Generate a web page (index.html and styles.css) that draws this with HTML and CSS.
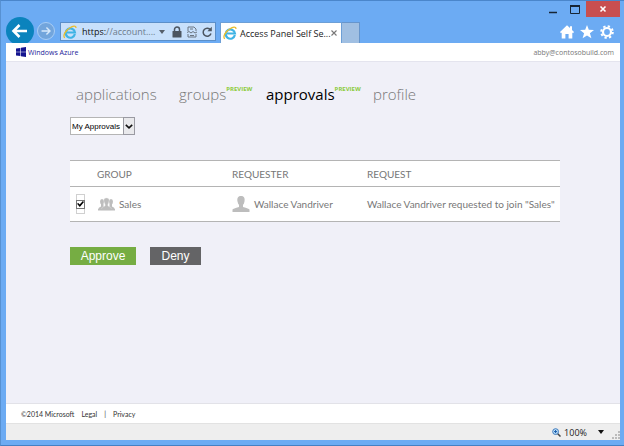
FILE: index.html
```html
<!DOCTYPE html>
<html lang="en">
<head>
<meta charset="utf-8">
<title>Access Panel Self Service</title>
<link rel="stylesheet" href="styles.css">
</head>
<body>
<svg class="defs" width="0" height="0" aria-hidden="true">
  <symbol id="ie" viewBox="0 0 16 16">
    <path d="M13.6 10.4A5.3 5.3 0 1 1 13.7 8.6H4.6" fill="none" stroke="#3fb4e5" stroke-width="2.5"/>
    <path d="M2.2 14.6C-1 13 3 6 8 3.2C11 1 15 .2 14.8 3.4" fill="none" stroke="#e9bd2d" stroke-width="1.5"/>
  </symbol>
</svg>
<div class="window">
  <header class="chrome">
    <div class="navigation">
      <button class="back" aria-label="Back"><svg viewBox="0 0 28 28"><path d="M21 14H8M13.5 8L7.500 14L13.500 20" fill="none" stroke="#fff" stroke-width="2.600"/></svg></button>
      <button class="forward" aria-label="Forward"><svg viewBox="0 0 18 18"><path d="M4 9H13M9.500 5L13.500 9L9.500 13" fill="none" stroke="#d7e9fb" stroke-width="1.600"/></svg></button>
      <div class="address">
        <svg class="ie"><use href="#ie"/></svg>
        <span class="url"><b>https:</b>//account....</span>
        <svg class="drop" viewBox="0 0 6 4"><path d="M0 0H6L3 4Z" fill="#555f6b"/></svg>
        <svg class="small" viewBox="0 0 10 12"><path d="M2.500 6V3.500a2.500 2.500 0 0 1 5 0V6" fill="none" stroke="#4d5661" stroke-width="1.500"/><rect x=".5" y="5" width="9" height="6.500" rx=".5" fill="#4d5661"/></svg>
        <svg class="small" viewBox="0 0 10 12"><path d="M1 5V1H7L9 3V5M1 8V11H9V8M0 6.500L2 5.500L4 7L6 5.500L8 7L10 6M3 3H6M3 9.500H7" fill="none" stroke="#6b7580"/></svg>
        <svg class="small" viewBox="0 0 10 12"><path d="M8.500 4A4 4 0 1 0 9 7.500" fill="none" stroke="#4d5661" stroke-width="1.500"/><path d="M9.800 .8V5.200H5.400Z" fill="#4d5661"/></svg>
      </div>
      <div class="tab">
        <svg class="ie"><use href="#ie"/></svg>
        <span class="tab-title">Access Panel Self Se...</span>
        <button class="tab-close" aria-label="Close tab"><svg viewBox="0 0 6 6"><path d="M.5 .5L5.500 5.500M5.500 .5L.5 5.500" stroke="#777" stroke-width="1.100"/></svg></button>
      </div>
      <button class="new-tab" aria-label="New tab"></button>
    </div>
    <div class="corner">
      <div class="controls">
        <button aria-label="Minimize"><svg viewBox="0 0 10 10"><path d="M1 8.500H9" stroke="#172534" stroke-width="1.500"/></svg></button>
        <button aria-label="Maximize"><svg viewBox="0 0 10 10"><path d="M.5 2H9.500M.5 1.500V9.500H9.500V1.500" fill="none" stroke="#172534"/><path d="M0 2H10" stroke="#172534" stroke-width="2"/></svg></button>
        <button class="close" aria-label="Close"><svg viewBox="0 0 10 10"><path d="M2.500 2.500L7.500 7.500M7.500 2.500L2.500 7.500" stroke="#fff" stroke-width="1.600"/></svg></button>
      </div>
      <div class="tools">
        <button aria-label="Home"><svg viewBox="0 0 14 14"><path d="M7 .3L10 3V1.300H12V5L14 7L13 8.200L12.300 7.600V13.500H8.600V9H5.400V13.500H1.700V7.600L1 8.200L0 7Z" fill="#fff"/></svg></button>
        <button aria-label="Favorites"><svg viewBox="0 0 14 14"><path d="M7 0L8.800 4.800L14 5L9.900 8.200L11.400 13.300L7 10.400L2.600 13.300L4.100 8.200L0 5L5.200 4.800Z" fill="#fff"/></svg></button>
        <button aria-label="Settings"><svg viewBox="0 0 14 14"><circle cx="7" cy="7" r="4" fill="none" stroke="#fff" stroke-width="2.200"/><circle cx="7" cy="7" r="5.800" fill="none" stroke="#fff" stroke-width="2" stroke-dasharray="2.300 2.255"/></svg></button>
      </div>
    </div>
  </header>
  <div class="page">
    <div class="brand-bar">
      <a class="brand" href="#"><svg viewBox="0 0 10 10"><path d="M0 1.500L4.300 .9V4.700H0ZM4.900 .8L10 0V4.700H4.900ZM0 5.300H4.300V9.100L0 8.500ZM4.900 5.300H10V10L4.900 9.200Z" fill="#14148f"/></svg>Windows Azure</a>
      <span class="account">abby@contosobuild.com</span>
    </div>
    <main>
      <nav>
        <a href="#">applications</a>
        <a href="#">groups<sup>PREVIEW</sup></a>
        <a class="current" href="#" aria-current="page">approvals<sup>PREVIEW</sup></a>
        <a href="#">profile</a>
      </nav>
      <div class="filter">
        <select aria-label="Approval list"><option>My Approvals</option></select>
        <span class="arrow"><svg viewBox="0 0 8 5"><path d="M.8 .8L4 3.800L7.200 .8" fill="none" stroke="#111" stroke-width="1.600"/></svg></span>
      </div>
      <table>
        <thead><tr><th class="pick"></th><th class="group">GROUP</th><th class="requester">REQUESTER</th><th>REQUEST</th></tr></thead>
        <tbody><tr>
          <td><label class="tick"><input type="checkbox" checked aria-label="Select Sales request"></label></td>
          <td><span class="entity"><svg class="people" viewBox="0 0 18 14"><g fill="#bdbdbd"><ellipse cx="5" cy="4.800" rx="2" ry="2.700"/><ellipse cx="14" cy="4.800" rx="2" ry="2.700"/><path d="M1 12.800Q1.200 10.200 4 9.400V7H6.500V12.800ZM18 12.800Q17.800 10.200 15 9.400V7H12.500V12.800Z"/><path d="M9.500 1C6.800 1 6.500 3.200 7.300 5.400Q7.600 6.600 8.100 7V9Q4.400 9.900 4.100 12.800H14.900Q14.600 9.900 10.900 9V7Q11.400 6.600 11.700 5.400C12.500 3.200 12.200 1 9.500 1Z" stroke="#e6e6e6" stroke-width=".4"/><path d="M1 12H18V13.500H1Z"/></g></svg>Sales</span></td>
          <td><span class="entity"><svg class="person" viewBox="0 0 18 18"><path d="M9 1C5.500 1 5 3.700 5.500 6.500Q6 9 7 9.800V12Q1 13.500.5 14.500V17H17.500V14.500Q17 13.500 11 12V9.800Q12 9 12.500 6.500C13 3.700 12.500 1 9 1Z" fill="#bdbdbd"/></svg>Wallace Vandriver</span></td>
          <td>Wallace Vandriver requested to join "Sales"</td>
        </tr></tbody>
      </table>
      <div class="actions">
        <button class="approve">Approve</button>
        <button class="deny">Deny</button>
      </div>
    </main>
    <footer><span>©2014 Microsoft</span><a href="#">Legal</a><span>|</span><a href="#">Privacy</a></footer>
    <div class="status">
      <button class="zoom"><svg class="lens" viewBox="0 0 9 9"><path d="M5.500 5.500L8.500 8.500" stroke="#444" stroke-width="1.500"/><circle cx="3.600" cy="3.600" r="2.900" fill="#c4e5fa" stroke="#3c77bb"/><path d="M3.600 2V5.200M2 3.600H5.200" stroke="#165bad"/></svg>100%<svg class="drop" viewBox="0 0 6 4"><path d="M0 0H6L3 4Z" fill="#111"/></svg></button>
      <svg class="grip" viewBox="0 0 8 8"><path d="M6 0H8V2H6ZM3 3H5V5H3ZM6 3H8V5H6ZM0 6H2V8H0ZM3 6H5V8H3ZM6 6H8V8H6Z" fill="#bbb"/></svg>
    </div>
  </div>
</div>
</body>
</html>
```
FILE: styles.css
```css
* { box-sizing: border-box; }
body { margin: 0; font-family: Lato, "Open Sans", sans-serif; font-size: 10px; color: #777; }
button { border: 0; padding: 0; background: none; font: inherit; color: inherit; }
a { color: inherit; text-decoration: none; }
svg { display: block; flex: none; }
.defs { position: absolute; }
.window {
  min-height: 100vh;
  display: flex;
  flex-direction: column;
  padding: 0 4px 5px 5px;
  background: #6cabf3;
  border-top: 1px solid #4a86cb;
  border-left: 1px solid #5791d2;
  border-bottom: 1px solid #4480c4;
}

.chrome { display: flex; justify-content: space-between; height: 42px; overflow: hidden; font: 9px "Open Sans", sans-serif; }
.navigation { display: flex; align-items: flex-end; }
.back { width: 28px; height: 28px; margin-bottom: -2px; border-radius: 50%; background: #0b83bd; }
.back svg { width: 28px; height: 28px; }
.forward { width: 18px; height: 18px; margin: 0 5px 3px 3px; border: 1px solid #a8cdf5; border-radius: 50%; background: #72a5dc; }
.forward svg { width: 16px; height: 16px; }
.address {
  display: flex;
  align-items: center;
  width: 156px;
  height: 19px;
  margin: 0 4px 2px 0;
  padding: 0 3px 0 2px;
  gap: 5px;
  background: #c8e0fb;
  border: 1px solid #5b8fc9;
}
.ie { width: 14px; height: 14px; }
.url { flex: 1; min-width: 0; color: #6d7b8b; white-space: nowrap; }
.url b { font-weight: 400; color: #111; }
.drop { width: 6px; height: 4px; }
.small { width: 10px; height: 12px; }
.address .drop { margin-right: 2px; }
.tab {
  display: flex;
  align-items: center;
  gap: 3px;
  width: 122px;
  height: 21px;
  padding: 0 4px 0 2px;
  background: #fff;
  border: 1px solid #6d9fd6;
  border-bottom: 0;
  color: #222;
}
.tab-title { flex: 1; min-width: 0; white-space: nowrap; }
.tab-close svg { width: 6px; height: 6px; }
.new-tab { width: 18px; height: 21px; background: #a0bfe2; border: 1px solid #6695cc; border-width: 1px 1px 0 0; }
.corner { display: flex; flex-direction: column; align-items: flex-end; gap: 8px; }
.controls { display: flex; align-items: center; gap: 12px; }
.controls svg { width: 10px; height: 10px; }
.controls .close { display: grid; place-items: center; width: 34px; height: 16px; margin-left: -6px; background: #c84f50; }
.tools { display: flex; gap: 6px; margin-right: 6px; }
.tools svg { width: 14px; height: 14px; }

.page { flex: 1; display: flex; flex-direction: column; background: #f0f0f8; }
.brand-bar {
  display: flex;
  align-items: center;
  justify-content: space-between;
  height: 19px;
  padding: 0 6px 0 10px;
  background: #fff;
  border-bottom: 1px solid #e4e4ee;
  font: 7px "Open Sans", sans-serif;
}
.brand { display: flex; align-items: center; gap: 2px; color: #24249a; }
.brand svg { width: 10px; height: 10px; }

main { flex: 1; padding: 20px 60px 20px 64px; }
nav { display: grid; grid-template-columns: 103px 87px 107px auto; padding-left: 6px; font: 300 15px/24px "Open Sans", sans-serif; white-space: nowrap; }
nav .current { color: #000; font-weight: 400; }
sup { font: 700 6px/6px "Open Sans", sans-serif; color: #8bcb3b; vertical-align: 9px; }
.filter { position: relative; width: 65px; height: 18px; margin-top: 11px; }
select {
  display: block;
  width: 100%;
  height: 100%;
  padding: 0 0 0 1px;
  appearance: none;
  border: 1px solid #b5b5b5;
  border-radius: 0;
  background: #fff;
  color: #000;
  font: 8px "Liberation Sans", sans-serif;
}
.arrow {
  position: absolute;
  top: 0;
  right: 0;
  bottom: 0;
  display: grid;
  place-items: center;
  width: 12px;
  background: #e9e9ec;
  border: 1px solid #9a9aa2;
  pointer-events: none;
}
.arrow svg { width: 8px; height: 5px; }

table { width: 100%; margin-top: 25px; border-collapse: separate; border-spacing: 0; table-layout: fixed; background: #fff; border-top: 1px solid #b4b4b4; text-align: left; white-space: nowrap; }
th, td { padding: 0; font-weight: 400; border-bottom: 1px solid #b4b4b4; }
th { height: 26px; }
td { height: 35px; }
.pick { width: 27px; }
.group, .requester { width: 135px; }
.tick { display: grid; grid-template-columns: 9px; place-content: center; width: 9px; height: 20px; margin-left: 6px; border: 1px solid #d0d0d0; }
.tick input { appearance: none; width: 9px; height: 9px; margin: 0; border: 1px solid #777; background: #fff; display: grid; place-items: center; }
.tick input:checked::before { content: ""; width: 7px; height: 7px; background: #000; clip-path: polygon(0 45%, 18% 35%, 38% 58%, 84% 6%, 100% 20%, 40% 94%); }
.entity { display: flex; align-items: center; gap: 4px; }
.people { width: 18px; height: 14px; }
.person { width: 18px; height: 18px; }
.actions { display: flex; gap: 14px; margin-top: 25px; }
.actions button { height: 18px; color: #fff; font: 12px "Liberation Sans", sans-serif; }
.approve { width: 66px; background: #76ad43; }
.actions .deny { width: 51px; background: #646466; }

footer { display: flex; align-items: center; gap: 7px; height: 20px; padding-left: 15px; background: #fff; border-top: 1px solid #e2e2e8; font-size: 7px; color: #333; }
.status { display: flex; align-items: center; justify-content: flex-end; height: 17px; background: #eee; border-top: 1px solid #e2e2e2; color: #222; font: 9px "Open Sans", sans-serif; }
.zoom { display: flex; align-items: center; gap: 3px; }
.zoom .drop { margin-left: 8px; }
.lens { width: 9px; height: 9px; }
.grip { width: 8px; height: 8px; margin: 6px 0 0 8px; }
```
